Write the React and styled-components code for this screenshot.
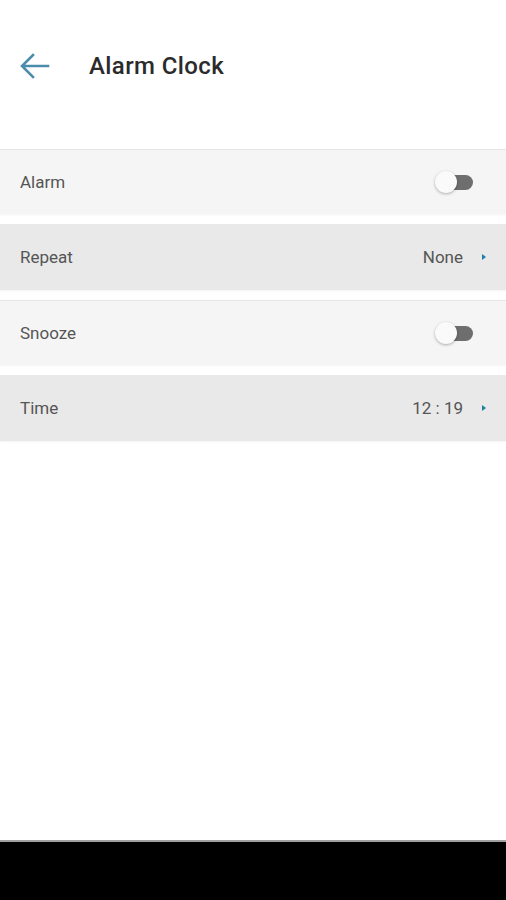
import React from "react";
import styled, { createGlobalStyle } from "styled-components";

const Global = createGlobalStyle`
  html, body { margin: 0; padding: 0; background: #fff; }
  body { font-family: Roboto, "Noto Sans", Arial, sans-serif; }
  * { box-sizing: border-box; }
`;

const Screen = styled.div`
  display: flex;
  flex-direction: column;
  min-height: 100vh;
  height: 900px;
`;

const Header = styled.header`
  height: 132px;
  display: flex;
  align-items: flex-start;
  padding: 52px 0 0 20px;
`;

const BackButton = styled.button`
  border: 0;
  background: none;
  padding: 0;
  width: 30px;
  height: 28px;
  display: flex;
  align-items: center;
  justify-content: center;
  cursor: pointer;
`;

const Title = styled.h1`
  margin: 0 0 0 39px;
  font-size: 24px;
  line-height: 28px;
  font-weight: 500;
  color: #2b2b2b;
  letter-spacing: 0.4px;
`;

const Main = styled.main`
  flex: 1;
  display: flex;
  flex-direction: column;
  gap: 10px;
  padding-top: 17px;
`;

const Row = styled.div`
  height: ${(p) => (p.$toggle ? 65 : 66)}px;
  display: flex;
  align-items: center;
  padding: 0 20px;
  background: ${(p) => (p.$toggle ? "#f5f5f5" : "#e9e9e9")};
  border-top: ${(p) => (p.$toggle ? "1px solid #e5e5e5" : "none")};
  box-shadow: 0 1px 2px rgba(0, 0, 0, 0.05);
`;

const Label = styled.span`
  flex: 1;
  font-size: 17px;
  color: #555;
`;

const Value = styled.span`
  font-size: 17px;
  color: #555;
  margin-right: 19px;
`;

const Chevron = styled.span`
  width: 0;
  height: 0;
  border-top: 3.5px solid transparent;
  border-bottom: 3.5px solid transparent;
  border-left: 4px solid #1f7fa6;
  margin-right: 0;
`;

const Switch = styled.div`
  position: relative;
  width: 38px;
  height: 22px;
  margin-right: 13px;
`;

const Track = styled.div`
  position: absolute;
  left: 4px;
  right: 0;
  top: 4px;
  height: 15px;
  border-radius: 8px;
  background: #6e6e6e;
`;

const Knob = styled.div`
  position: absolute;
  left: 0;
  top: 0;
  width: 22px;
  height: 22px;
  border-radius: 50%;
  background: #fafafa;
  box-shadow: 0 1px 3px rgba(0, 0, 0, 0.3);
`;

const NavBar = styled.div`
  height: 60px;
  background: #000;
  border-top: 2px solid #a0a0a0;
`;

const Toggle = () => (
  <Switch>
    <Track />
    <Knob />
  </Switch>
);

export default function App() {
  return (
    <>
      <Global />
      <Screen>
        <Header>
          <BackButton aria-label="Back">
            <svg width="30" height="26" viewBox="0 0 30 26" fill="none">
              <path
                d="M28 13H3M13 2L2 13l11 11"
                stroke="#4b8bab"
                strokeWidth="2.6"
                strokeLinecap="square"
                strokeLinejoin="miter"
              />
            </svg>
          </BackButton>
          <Title>Alarm Clock</Title>
        </Header>
        <Main>
          <Row $toggle>
            <Label>Alarm</Label>
            <Toggle />
          </Row>
          <Row>
            <Label>Repeat</Label>
            <Value>None</Value>
            <Chevron />
          </Row>
          <Row $toggle>
            <Label>Snooze</Label>
            <Toggle />
          </Row>
          <Row>
            <Label>Time</Label>
            <Value>12 : 19</Value>
            <Chevron />
          </Row>
        </Main>
        <NavBar />
      </Screen>
    </>
  );
}
